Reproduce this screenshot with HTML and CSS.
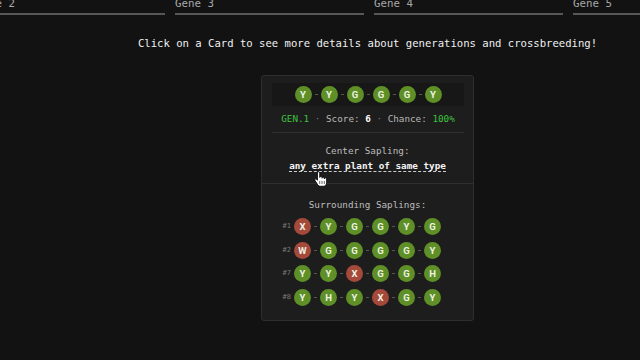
FILE: index.html
```html
<!DOCTYPE html>
<html lang="en">
	<head>
		<meta charset="utf-8" />
		<title>Crossbreeding</title>
		<link rel="stylesheet" href="styles.css">
	</head>

	<body>
		<nav class="tabs">
			<div class="tab">Gene 2</div>
			<div class="tab">Gene 3</div>
			<div class="tab">Gene 4</div>
			<div class="tab">Gene 5</div>
		</nav>

		<section class="main">
			<p class="hint">Click on a Card to see more details about generations and crossbreeding!</p>

			<article class="card">
				<div class="top">
					<div class="genes">
						<span class="gene">Y</span><span class="link"></span>
						<span class="gene">Y</span><span class="link"></span>
						<span class="gene">G</span><span class="link"></span>
						<span class="gene">G</span><span class="link"></span>
						<span class="gene">G</span><span class="link"></span>
						<span class="gene">Y</span>
					</div>
					<p class="stats">
						<span class="green">GEN.1</span> <span class="dot">&middot;</span> Score: <b>6</b> <span class="dot">&middot;</span> Chance: <span class="green">100%</span>
					</p>
				</div>

				<div class="center">
					<p class="label">Center Sapling:</p>
					<p class="plant"><span>any extra plant of same type</span></p>
				</div>

				<div class="surround">
					<p class="label">Surrounding Saplings:</p>
					<div class="rows">
						<span class="num">#1</span>
						<div class="chain">
							<span class="gene red">X</span><span class="link"></span>
							<span class="gene">Y</span><span class="link"></span>
							<span class="gene">G</span><span class="link"></span>
							<span class="gene">G</span><span class="link"></span>
							<span class="gene">Y</span><span class="link"></span>
							<span class="gene">G</span>
						</div>
						<span></span>

						<span class="num">#2</span>
						<div class="chain">
							<span class="gene red">W</span><span class="link"></span>
							<span class="gene">G</span><span class="link"></span>
							<span class="gene">G</span><span class="link"></span>
							<span class="gene">G</span><span class="link"></span>
							<span class="gene">G</span><span class="link"></span>
							<span class="gene">Y</span>
						</div>
						<span></span>

						<span class="num">#7</span>
						<div class="chain">
							<span class="gene">Y</span><span class="link"></span>
							<span class="gene">Y</span><span class="link"></span>
							<span class="gene red">X</span><span class="link"></span>
							<span class="gene">G</span><span class="link"></span>
							<span class="gene">G</span><span class="link"></span>
							<span class="gene">H</span>
						</div>
						<span></span>

						<span class="num">#8</span>
						<div class="chain">
							<span class="gene">Y</span><span class="link"></span>
							<span class="gene">H</span><span class="link"></span>
							<span class="gene">Y</span><span class="link"></span>
							<span class="gene red">X</span><span class="link"></span>
							<span class="gene">G</span><span class="link"></span>
							<span class="gene">Y</span>
						</div>
						<span></span>
					</div>
				</div>

				<svg class="cursor" width="13" height="16" viewBox="0 0 17 21">
					<path d="M4.5 2.5a1.5 1.5 0 0 1 3 0V8.5a1.5 1.5 0 0 1 3 0V9.5a1.5 1.5 0 0 1 3 0V10.5a1.5 1.5 0 0 1 3 0V15.5c0 2.5-1.6 4.5-4 4.5H8.5c-2 0-3-1-4-2.5L1.3 12.6a1.4 1.4 0 0 1 2.3-1.6L4.5 12.2Z" fill="#fff" stroke="#000" stroke-width="1.1" stroke-linejoin="round"/>
					<path d="M7.5 13v4M10.5 13v4M13.5 13v4" stroke="#000" stroke-width="0.8"/>
				</svg>
			</article>
		</section>
	</body>
</html>
```

FILE: styles.css
```css
body{
	margin: 0;
	width: 640px;
	height: 360px;
	overflow: hidden;
	background-color: #121212;
	font-family: "DejaVu Sans Mono", "Liberation Mono", monospace;
	color: #e0e0e0;
}

p{
	margin: 0;
}

.tabs{
	display: flex;
	gap: 10px;
	margin-left: -24px;
	margin-top: -2px;
}

.tab{
	flex: none;
	width: 189px;
	font-size: 10.8px;
	line-height: 12px;
	color: #a8a8a8;
	padding-bottom: 3px;
	border-bottom: 2px solid #575757;
}

.main{
	padding-left: 95px;
	display: flex;
	flex-direction: column;
	align-items: center;
}

.hint{
	margin-top: 21px;
	font-size: 10.6px;
	line-height: 14px;
	color: #f0f0f0;
	white-space: nowrap;
}

.card{
	position: relative;
	margin-top: 25px;
	width: 211px;
	background-color: #1d1d1d;
	border: 1px solid #2e2e2e;
	border-radius: 3px;
	font-size: 9.3px;
	line-height: 13px;
	text-align: center;
}

.top{
	padding: 7px 9px 0 10px;
}

.genes{
	background-color: #171717;
	padding: 3px 0;
	display: flex;
	justify-content: center;
	align-items: center;
}

.chain{
	display: flex;
	align-items: center;
}

.gene{
	width: 17px;
	height: 17px;
	border-radius: 50%;
	background-color: #5f8f27;
	color: #eef3e4;
	font-family: Roboto, "Liberation Sans", sans-serif;
	font-weight: bold;
	font-size: 9.5px;
	line-height: 17px;
	text-align: center;
}

.gene.red{
	background-color: #a5493b;
}

.link{
	width: 3px;
	height: 1px;
	margin: 0 3px;
	background-color: #555;
}

.stats{
	padding: 6px 0 7px;
	border-bottom: 1px solid #303030;
	color: #b8b8b8;
	white-space: nowrap;
}

.stats b{
	color: #fff;
}

.green{
	color: #3ec23e;
}

.dot{
	color: #777;
}

.center{
	padding: 11px 0 11px;
}

.label{
	color: #bdbdbd;
}

.plant{
	margin-top: 2px;
	font-weight: bold;
	color: #f4f4f4;
}

.plant span{
	border-bottom: 1px dashed #cfcfcf;
}

.surround{
	border-top: 1px solid #303030;
	padding: 14px 0 14px;
}

.rows{
	margin-top: 7px;
	display: grid;
	grid-template-columns: 14px 147px 14px;
	column-gap: 3px;
	row-gap: 6.5px;
	justify-content: center;
	align-items: center;
}

.num{
	font-size: 7px;
	color: #7a7a7a;
	text-align: right;
}

.cursor{
	position: absolute;
	left: 52px;
	top: 95px;
}
```
